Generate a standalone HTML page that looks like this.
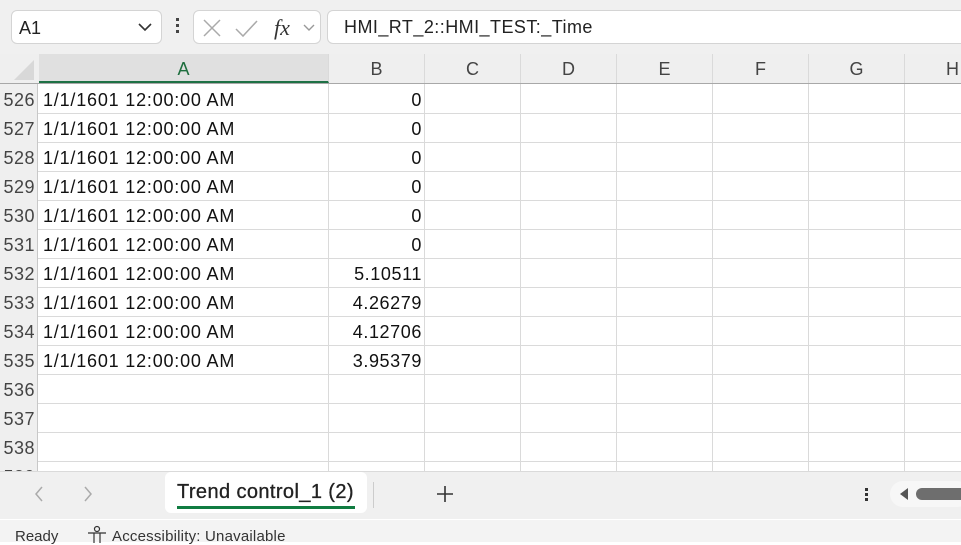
<!DOCTYPE html>
<html><head><style>
*{margin:0;padding:0;box-sizing:border-box}
body{width:961px;height:542px;overflow:hidden;background:#fff;font-family:"Liberation Sans",sans-serif;position:relative}
.a{position:absolute}
.top{left:0;top:0;width:961px;height:54px;background:#f0f0f0}
.nb{left:11px;top:10px;width:151px;height:34px;background:#fff;border:1px solid #d4d4d4;border-radius:6px;font-size:18px;padding:7px 0 0 7px;color:#222}
.fb{left:193px;top:10px;width:128px;height:34px;background:#fff;border:1px solid #d4d4d4;border-radius:6px}
.fx{left:327px;top:10px;width:640px;height:34px;background:#fff;border:1px solid #d4d4d4;border-radius:6px 0 0 6px;font-size:18px;letter-spacing:0.45px;padding:6px 0 0 16px;color:#222}
.hdr{left:0;top:54px;width:961px;height:30px;background:#efefef;border-bottom:1px solid #a8a8a8}
.ch{top:54px;height:29px;font-size:18px;color:#444;text-align:center;padding-top:5px;border-right:1px solid #dadada}
.rh{left:0;width:38px;height:29px;background:#efefef;font-size:18px;letter-spacing:0.5px;color:#444;text-align:right;padding:6px 2px 0 0;border-right:1px solid #c8c8c8}
.hl{left:38px;width:923px;height:1px;background:#dadada}
.vl{top:84px;width:1px;height:387px;background:#dadada}
.c{font-size:18px;letter-spacing:0.8px;color:#111;height:29px;padding-top:6px}
.r{left:329px;width:93px;text-align:right;letter-spacing:0.6px}
.tabbar{left:0;top:471px;width:961px;height:48px;background:#f0f0f0;border-top:1px solid #dadada}
.status{left:0;top:519px;width:961px;height:23px;background:#f3f3f3;border-top:1px solid #fff;font-size:15px;color:#333}
</style></head><body>
<div class="a top"></div>
<div class="a nb">A1<svg class="a" style="left:126px;top:12px" width="14" height="9"><path d="M1 1l6 6 6-6" stroke="#333" stroke-width="1.6" fill="none"/></svg></div>
<div class="a" style="left:176px;top:18px;width:3px;height:3px;background:#444;box-shadow:0 6px 0 #444,0 12px 0 #444"></div>
<div class="a fb"><svg width="128" height="34"><path d="M10 9l16 16M26 9l-16 16" stroke="#aaa" stroke-width="1.5"/><path d="M42 18l7 7 14-15" stroke="#aaa" stroke-width="1.5" fill="none"/><text x="80" y="24" font-family="Liberation Serif" font-style="italic" font-size="22" fill="#333">fx</text><path d="M110 14l5 5 5-5" stroke="#999" stroke-width="1.4" fill="none"/></svg></div>
<div class="a fx">HMI_RT_2::HMI_TEST:_Time</div>
<div class="a hdr"></div>
<svg class="a" style="left:14px;top:60px" width="22" height="20"><path d="M20 0V20H0z" fill="#d8d8d8"/></svg>
<div class="a ch" style="left:39px;width:290px;background:#e0e0e0;color:#1e6e3e;border-bottom:2px solid #1e7145;height:29px">A</div>
<div class="a ch" style="left:329px;width:96px">B</div>
<div class="a ch" style="left:425px;width:96px">C</div>
<div class="a ch" style="left:521px;width:96px">D</div>
<div class="a ch" style="left:617px;width:96px">E</div>
<div class="a ch" style="left:713px;width:96px">F</div>
<div class="a ch" style="left:809px;width:96px">G</div>
<div class="a ch" style="left:905px;width:96px">H</div>

<div class="a vl" style="left:328px"></div><div class="a vl" style="left:424px"></div><div class="a vl" style="left:520px"></div><div class="a vl" style="left:616px"></div><div class="a vl" style="left:712px"></div><div class="a vl" style="left:808px"></div><div class="a vl" style="left:904px"></div>

<div class="a rh" style="top:84px">526</div><div class="a rh" style="top:113px">527</div><div class="a rh" style="top:142px">528</div><div class="a rh" style="top:171px">529</div><div class="a rh" style="top:200px">530</div><div class="a rh" style="top:229px">531</div><div class="a rh" style="top:258px">532</div><div class="a rh" style="top:287px">533</div><div class="a rh" style="top:316px">534</div><div class="a rh" style="top:345px">535</div><div class="a rh" style="top:374px">536</div><div class="a rh" style="top:403px">537</div><div class="a rh" style="top:432px">538</div><div class="a rh" style="top:461px">539</div>

<div class="a hl" style="top:113px"></div><div class="a hl" style="top:142px"></div><div class="a hl" style="top:171px"></div><div class="a hl" style="top:200px"></div><div class="a hl" style="top:229px"></div><div class="a hl" style="top:258px"></div><div class="a hl" style="top:287px"></div><div class="a hl" style="top:316px"></div><div class="a hl" style="top:345px"></div><div class="a hl" style="top:374px"></div><div class="a hl" style="top:403px"></div><div class="a hl" style="top:432px"></div><div class="a hl" style="top:461px"></div>

<div class="a c" style="left:43px;top:84px">1/1/1601 12:00:00 AM</div>
<div class="a c" style="left:43px;top:113px">1/1/1601 12:00:00 AM</div>
<div class="a c" style="left:43px;top:142px">1/1/1601 12:00:00 AM</div>
<div class="a c" style="left:43px;top:171px">1/1/1601 12:00:00 AM</div>
<div class="a c" style="left:43px;top:200px">1/1/1601 12:00:00 AM</div>
<div class="a c" style="left:43px;top:229px">1/1/1601 12:00:00 AM</div>
<div class="a c" style="left:43px;top:258px">1/1/1601 12:00:00 AM</div>
<div class="a c" style="left:43px;top:287px">1/1/1601 12:00:00 AM</div>
<div class="a c" style="left:43px;top:316px">1/1/1601 12:00:00 AM</div>
<div class="a c" style="left:43px;top:345px">1/1/1601 12:00:00 AM</div>
<div class="a c r" style="top:84px">0</div>
<div class="a c r" style="top:113px">0</div>
<div class="a c r" style="top:142px">0</div>
<div class="a c r" style="top:171px">0</div>
<div class="a c r" style="top:200px">0</div>
<div class="a c r" style="top:229px">0</div>
<div class="a c r" style="top:258px">5.10511</div>
<div class="a c r" style="top:287px">4.26279</div>
<div class="a c r" style="top:316px">4.12706</div>
<div class="a c r" style="top:345px">3.95379</div>

<div class="a tabbar"></div>
<svg class="a" style="left:30px;top:484px" width="70" height="20"><path d="M12 3l-6 7 6 7" stroke="#aaa" stroke-width="1.5" fill="none"/><path d="M55 3l6 7-6 7" stroke="#aaa" stroke-width="1.5" fill="none"/></svg>
<div class="a" style="left:165px;top:472px;width:202px;height:41px;background:#fff;border-radius:6px;font-size:20px;letter-spacing:0.4px;color:#222;padding:9px 0 0 12px;-webkit-text-stroke:0.3px #222">Trend control_1 (2)<div class="a" style="left:12px;top:34px;width:178px;height:3px;background:#107c41"></div></div>
<div class="a" style="left:373px;top:482px;width:1px;height:26px;background:#ccc"></div>
<svg class="a" style="left:436px;top:485px" width="18" height="18"><path d="M9 1v16M1 9h16" stroke="#333" stroke-width="1.6"/></svg>
<div class="a" style="left:865px;top:488px;width:3px;height:3px;background:#333;box-shadow:0 5px 0 #333,0 10px 0 #333"></div>
<div class="a" style="left:890px;top:481px;width:80px;height:26px;background:#f7f7f7;border-radius:13px"></div>
<svg class="a" style="left:898px;top:487px" width="12" height="14"><path d="M10 1L2 7l8 6z" fill="#555"/></svg>
<div class="a" style="left:916px;top:488px;width:60px;height:12px;background:#6e6e6e;border-radius:6px"></div>
<div class="a status"><span class="a" style="left:15px;top:8px">Ready</span>
<svg class="a" style="left:86px;top:5px" width="22" height="20"><circle cx="11" cy="4" r="2.5" stroke="#333" fill="none" stroke-width="1.2"/><path d="M2 8h18M8 8v10M14 8v10" stroke="#333" stroke-width="1.2" fill="none"/></svg>
<span class="a" style="left:112px;top:8px;letter-spacing:0.2px">Accessibility: Unavailable</span></div>
</body></html>
